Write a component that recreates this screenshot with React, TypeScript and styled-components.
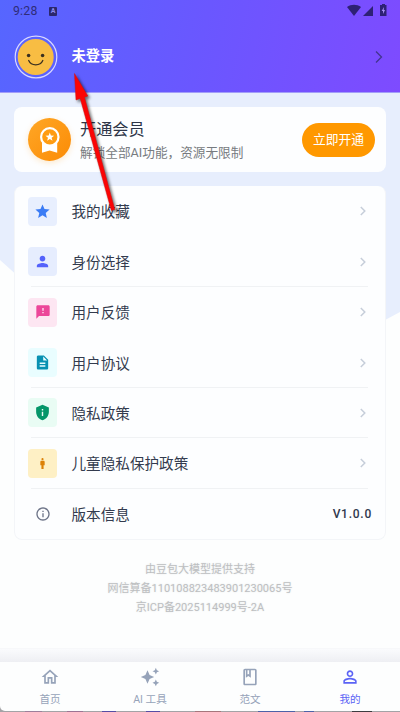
import React from 'react';
import styled, { createGlobalStyle } from 'styled-components';
import {
  MdStar, MdPerson, MdFeedback, MdDescription, MdPrivacyTip, MdMan, MdInfoOutline,
  MdOutlineHome, MdAutoAwesome, MdOutlineBook, MdPersonOutline,
} from 'react-icons/md';

const Global = createGlobalStyle`
  * { box-sizing: border-box; }
  body { margin: 0; background: #fdfdfe; font-family: Roboto, "Noto Sans CJK SC", sans-serif; overflow: hidden; }
  svg { display: block; flex: none; }
`;

const Screen = styled.div`
  position: relative;
  width: 400px;
  height: 712px;
  display: flex;
  flex-direction: column;
  background: #a3a3a6;
  overflow: hidden;
`;

const Header = styled.header`
  height: 93px;
  flex: none;
  background: linear-gradient(103deg, #5666ff 0%, #6a57ff 50%, #7e4bff 100%);
  border-bottom: 1px solid #a29df9;
`;

const StatusBar = styled.div`
  height: 22px;
  display: flex;
  align-items: center;
  padding: 0 12px 0 13px;
  font-size: 12.3px;
  color: #2f2c78;
`;

const Clock = styled.span`
  width: 36px;
  letter-spacing: 0.2px;
  line-height: 14px;
`;

const AppBadge = styled.span`
  width: 8px;
  height: 9px;
  border-radius: 1px;
  background: #2b286c;
  color: #8d8af0;
  font-size: 7px;
  font-weight: 700;
  line-height: 9px;
  text-align: center;
`;

const StatusIcons = styled.svg`
  margin: -1px 1px 0 auto;
`;

const Profile = styled.div`
  height: 70px;
  display: flex;
  align-items: center;
  padding: 0 17px 0 14px;
`;

const UserName = styled.h1`
  flex: 1;
  margin: 0 0 2px 13.5px;
  font-size: 14.3px;
  line-height: 20px;
  font-weight: 700;
  color: #fff;
`;

const Content = styled.main`
  position: relative;
  height: 569px;
  flex: none;
  padding: 14px 14px 0;
  background: #fdfefe;
  &::before {
    content: "";
    position: absolute;
    inset: 0;
    height: 240px;
    background: #e7eefd;
    clip-path: polygon(0 0, 100% 0, 100% 219px, 372px 234px, 30px 194px, 0 167px);
  }
`;

const Card = styled.section`
  position: relative;
  background: #fdfeff;
  border-radius: 8px;
`;

const MemberCard = styled(Card)`
  height: 65px;
  display: flex;
  align-items: center;
  padding: 0 11px 0 14px;
`;

const Medal = styled.div`
  width: 43px;
  height: 43px;
  border-radius: 50%;
  background: linear-gradient(135deg, #ffa726, #fb8b05);
  box-shadow: 0 2px 6px rgba(255, 152, 0, 0.2);
`;

const MemberText = styled.div`
  flex: 1;
  padding: 3px 0 0 9px;
`;

const MemberTitle = styled.div`
  font-size: 16.2px;
  line-height: 22px;
  color: #2e3648;
`;

const MemberNote = styled.div`
  font-size: 12.65px;
  line-height: 23px;
  color: #777b80;
  white-space: nowrap;
`;

const JoinButton = styled.button`
  width: 73px;
  height: 34px;
  padding: 1px 0 0;
  border: 0;
  border-radius: 17px;
  background: #ff9800;
  color: #fff;
  font: 12.8px/20px Roboto, "Noto Sans CJK SC", sans-serif;
`;

const Menu = styled(Card)`
  height: 354px;
  margin-top: 14px;
  border: 1px solid #f3f5f8;
  border-top: 0;
`;

const MenuRow = styled.div<{ $divided: boolean }>`
  height: 50.45px;
  display: flex;
  align-items: center;
  margin: 0 17px 0 13px;
  background: linear-gradient(#f0f2f4, #f0f2f4) 3px 100% / calc(100% - 3px) ${p => (p.$divided ? '1px' : '0')} no-repeat;
`;

const IconTile = styled.div<{ $bg: string; $color: string }>`
  width: 29px;
  height: 29px;
  border-radius: 4px;
  background: ${p => p.$bg};
  color: ${p => p.$color};
  display: grid;
  place-items: center;
`;

const RowLabel = styled.span`
  flex: 1;
  padding: 2px 0 0 14.5px;
  font-size: 14.6px;
  line-height: 22px;
  color: #333b4e;
`;

const RowChevron = styled.svg`
  margin-right: 2px;
`;

const Version = styled.span`
  margin-right: -4px;
  font-size: 12px;
  font-weight: 500;
  letter-spacing: 0.75px;
  color: #30384d;
`;

const Credits = styled.footer`
  position: relative;
  padding-top: 20px;
  text-align: center;
  font-size: 11px;
  line-height: 19.2px;
  color: #bdbfc1;
  text-shadow: 0 0 2px #e2e4e6;
`;

const Fade = styled.div`
  position: absolute;
  left: 0;
  right: 0;
  bottom: 0;
  height: 14px;
  border-top: 1px solid #f7f8fa;
  background: linear-gradient(#fafbfd, #eeeff3);
`;

const TabBar = styled.nav`
  height: 49px;
  flex: none;
  display: grid;
  grid-template-columns: repeat(4, 1fr);
  background: #fdfefe;
  border-radius: 0 0 0 5px;
`;

const Tab = styled.a<{ $active?: boolean }>`
  display: flex;
  flex-direction: column;
  align-items: center;
  padding-top: 5px;
  gap: 6px;
  font-size: 10.6px;
  line-height: 14px;
  color: ${p => (p.$active ? '#5b63f5' : '#96a3b9')};
`;

const DesktopEdge = styled.div`
  height: 1px;
  flex: none;
  background: linear-gradient(
    90deg,
    #a3a3a6 25px, #9c7f9b 25px 42px, #a3a3a6 42px 67px, #9c7494 67px 83px, #a3a3a6 83px 102px,
    #554da4 102px 116px, #a3a3a6 116px 146px, #554da4 146px 160px, #a3a3a6 160px 195px,
    #a5767c 195px 221px, #a3a3a6 221px 258px, #4d62a8 258px 295px, #a3a3a6 295px 304px,
    #4d62a8 304px 314px, #a3a3a6 314px 352px, #3c3c40 352px 372px, #a3a3a6 372px
  );
`;

const Pointer = styled.svg`
  position: absolute;
  left: 60px;
  top: 65px;
  filter: drop-shadow(2px 2px 1.5px rgba(0, 0, 0, 0.55));
`;

const rows = [
  { label: '我的收藏', Icon: MdStar, size: 17, bg: '#e8effe', color: '#3b7cf5', divided: false },
  { label: '身份选择', Icon: MdPerson, size: 17, bg: '#e6edfe', color: '#5462fb', divided: true },
  { label: '用户反馈', Icon: MdFeedback, size: 16, bg: '#fde6f2', color: '#ec4699', divided: false },
  { label: '用户协议', Icon: MdDescription, size: 17, bg: '#e9fdff', color: '#0891b2', divided: true },
  { label: '隐私政策', Icon: MdPrivacyTip, size: 17, bg: '#e9fcf4', color: '#059669', divided: true },
  { label: '儿童隐私保护政策', Icon: MdMan, size: 13, bg: '#fef0c5', color: '#dc8108', divided: true },
  { label: '版本信息', Icon: MdInfoOutline, size: 16, bg: 'transparent', color: '#6d7488', divided: false },
];

const tabs = [
  { label: '首页', Icon: MdOutlineHome },
  { label: 'AI 工具', Icon: MdAutoAwesome },
  { label: '范文', Icon: MdOutlineBook },
  { label: '我的', Icon: MdPersonOutline },
];

const Avatar = () => (
  <svg width="44" height="44" viewBox="0 0 44 44" fill="none">
    <circle cx="22" cy="22" r="20.8" stroke="#dad8ff" strokeWidth="1.2" />
    <circle cx="21.7" cy="22" r="18" fill="#f8bd43" />
    <circle cx="14.6" cy="20.5" r="1.8" fill="#3b301f" />
    <circle cx="28.6" cy="20.5" r="1.8" fill="#3b301f" />
    <path d="M14.7 25.5C17.2 31.2 26.3 31.2 28.8 25.5" stroke="#3b301f" strokeWidth="1.3" strokeLinecap="round" />
  </svg>
);

const MedalIcon = () => (
  <svg width="43" height="43" viewBox="0 0 43 43">
    <path d="M14 24h15.2v10.8l-7.6-2.3-7.6 2.3Z" fill="#fff" />
    <circle cx="21.8" cy="18.9" r="8.7" fill="#ff9c12" stroke="#fff" strokeWidth="2.2" />
    <path d="m21.8 14.6 1.1 3 3.2.1-2.5 2 .9 3.1-2.7-1.8-2.7 1.8.9-3.1-2.5-2 3.2-.1Z" fill="#fff" />
  </svg>
);

export default function App() {
  return (
    <>
      <Global />
      <Screen>
        <Header>
          <StatusBar>
            <Clock>9:28</Clock>
            <AppBadge>A</AppBadge>
            <StatusIcons width="40" height="13" viewBox="0 0 40 13" fill="#2e2175">
              <path d="M0 3C4 0 10 0 14 3L7 12Z" />
              <path d="M26 2V12H16Z" />
              <path d="M34 1h1V0h3v1h1.5v11H33V1Z" />
              <path d="M37 3 34.7 7H36v3l2-4h-1.3Z" fill="#a990f5" />
            </StatusIcons>
          </StatusBar>
          <Profile>
            <Avatar />
            <UserName>未登录</UserName>
            <svg width="8" height="14" viewBox="0 0 8 14" fill="none" stroke="#42348f" strokeWidth="1.3">
              <path d="M1 1.5 6.5 7 1 12.5" />
            </svg>
          </Profile>
        </Header>
        <Content>
          <MemberCard>
            <Medal><MedalIcon /></Medal>
            <MemberText>
              <MemberTitle>开通会员</MemberTitle>
              <MemberNote>解锁全部AI功能，资源无限制</MemberNote>
            </MemberText>
            <JoinButton>立即开通</JoinButton>
          </MemberCard>
          <Menu>
            {rows.map(({ label, Icon, size, bg, color, divided }, i) => (
              <MenuRow key={label} $divided={divided}>
                <IconTile $bg={bg} $color={color}><Icon size={size} /></IconTile>
                <RowLabel>{label}</RowLabel>
                {i < rows.length - 1
                  ? (
                    <RowChevron width="6" height="10" viewBox="0 0 6 10" fill="none" stroke="#c6ceda" strokeWidth="1.5">
                      <path d="M.8 1 4.8 5l-4 4" />
                    </RowChevron>
                  )
                  : <Version>V1.0.0</Version>}
              </MenuRow>
            ))}
          </Menu>
          <Credits>
            <div>由豆包大模型提供支持</div>
            <div>网信算备110108823483901230065号</div>
            <div>京ICP备2025114999号-2A</div>
          </Credits>
          <Fade />
        </Content>
        <TabBar>
          {tabs.map(({ label, Icon }) => (
            <Tab key={label} $active={label === '我的'}>
              <Icon size={20} />
              {label}
            </Tab>
          ))}
        </TabBar>
        <DesktopEdge />
        <Pointer width="65" height="150" viewBox="0 0 65 150">
          <path d="M14.5 8.5 27.8 31 24.5 32.3 54.8 144.5 51.3 145.5 20.2 33.4 16 35Z" fill="#fb0404" stroke="#d01010" strokeWidth="0.5" />
        </Pointer>
      </Screen>
    </>
  );
}
